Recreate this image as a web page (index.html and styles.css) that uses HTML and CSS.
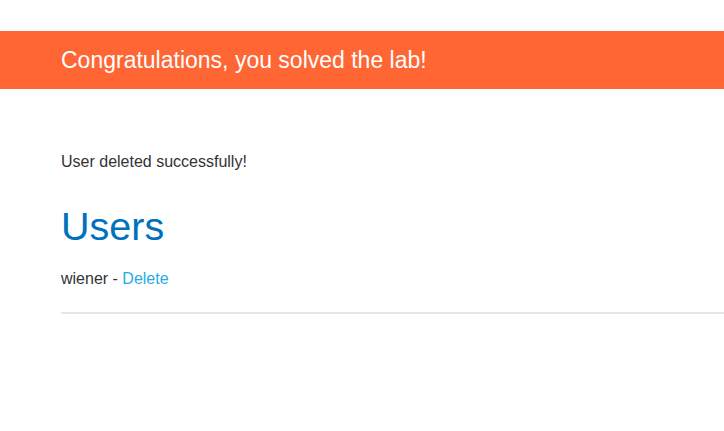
FILE: index.html
```html
<!DOCTYPE html>
<html>
<head>
<meta charset="utf-8">
<link rel="stylesheet" href="styles.css">
</head>
<body>
<div class="spacer"></div>
<section class="banner">
  <div class="banner-inner">
    <h4>Congratulations, you solved the lab!</h4>
  </div>
</section>
<div class="container">
  <p class="message">User deleted successfully!</p>
  <h1 class="title">Users</h1>
  <div class="user-row">
    <span>wiener - </span><a class="link" href="#">Delete</a>
  </div>
  <hr class="rule">
</div>
</body>
</html>
```
FILE: styles.css
```css
html, body {
  margin: 0;
  padding: 0;
  background: #ffffff;
  font-family: "Liberation Sans", Arial, sans-serif;
  color: #333332;
  overflow: hidden;
}
.spacer {
  height: 31px;
}
.banner {
  background: #ff6633;
  height: 58px;
  display: flex;
  align-items: center;
}
.banner-inner {
  padding-left: 61px;
}
.banner h4 {
  margin: 0;
  font-size: 23px;
  font-weight: normal;
  color: #ffffff;
}
.container {
  padding-left: 61px;
  padding-top: 63px;
}
.message {
  margin: 0;
  font-size: 16px;
  line-height: 20px;
}
.title {
  margin: 30px 0 0 0;
  font-size: 39.5px;
  font-weight: normal;
  color: #0071bc;
  line-height: 48px;
}
.user-row {
  margin-top: 19px;
  font-size: 16px;
  line-height: 20px;
}
.link {
  color: #29abe2;
  text-decoration: none;
}
.rule {
  margin: 23px 0 0 0;
  border: none;
  height: 2px;
  background: #e6e6e6;
}
```
